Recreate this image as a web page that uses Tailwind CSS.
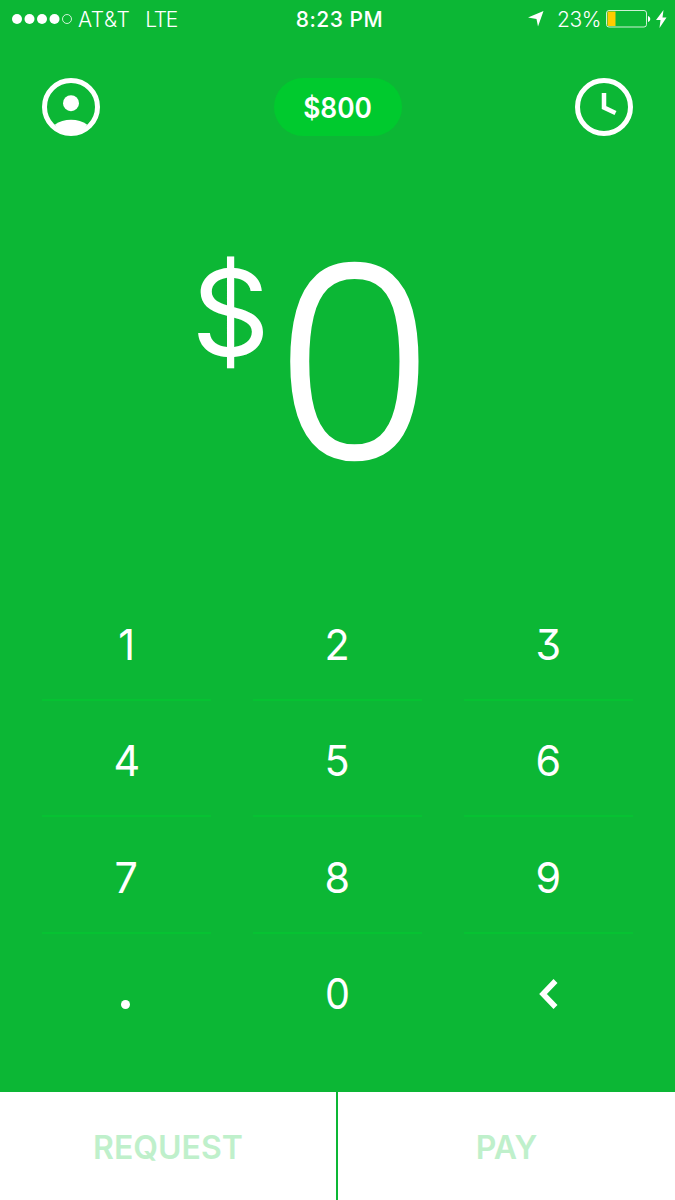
<!DOCTYPE html>
<html lang="en">
<head>
    <meta charset="UTF-8">
    <meta name="viewport" content="width=device-width, initial-scale=1.0">
    <title>Cash</title>
    <script src="https://cdn.jsdelivr.net/npm/@tailwindcss/browser@4"></script>
    <style>
        body {
            font-family: 'Inter', 'Liberation Sans', sans-serif;
            -webkit-font-smoothing: antialiased;
        }
        /* Flat-topped three on the keypad */
        #keypad {
            font-feature-settings: 'cv09' 1;
        }
        /* Weight between light and regular */
        #amount {
            -webkit-text-stroke: 5.5px #fff;
        }
    </style>
</head>
<body class="bg-[#0cb735] text-white h-[1200px] w-[675px] flex flex-col overflow-hidden">

    <!-- Status bar -->
    <div class="h-[38px] shrink-0 grid grid-cols-[1fr_auto_1fr] items-center pl-[12px] pr-[8px] pt-px text-[21px] leading-[37px]">
        <div class="flex items-center">
            <svg class="w-[61px] h-[12px] -mt-[2px]" viewBox="0 0 61 12" fill="#fff">
                <circle cx="5" cy="6" r="5" />
                <circle cx="17.5" cy="6" r="5" />
                <circle cx="30" cy="6" r="5" />
                <circle cx="42.5" cy="6" r="5" />
                <circle cx="55" cy="6" r="4.5" fill="none" stroke="#fff" stroke-width=".8" />
            </svg>
            <span class="ml-[5px] font-light tracking-[0.5px]">AT&amp;T</span>
            <span class="ml-[15px] font-light tracking-[-1.3px]">LTE</span>
        </div>
        <span class="font-medium tracking-[0.5px]">8:23 PM</span>
        <div class="flex items-center justify-end">
            <svg class="w-[16px] h-[16px] mr-[13px] -mt-px" viewBox="0 0 16 16" fill="#fff"><path d="M15.500 0 10 15.500 8.500 8 0 6.500z" /></svg>
            <span class="font-light tracking-[-0.4px]">23%</span>
            <svg class="w-[45px] h-[18px] ml-[5px] -mt-px" viewBox="0 0 45 18">
                <rect x=".5" y=".5" width="40" height="16.500" rx="2.500" fill="none" stroke="#fff" stroke-opacity=".8" />
                <path d="M2.500 1.500h7v14.500h-7a1 1 0 0 1-1-1V2.500a1 1 0 0 1 1-1z" fill="#ffcc00" />
                <path d="M42 6c3 1 3 5 0 6z" fill="#fff" />
            </svg>
            <svg class="w-[11px] h-[18px] ml-[5px] -mt-[2px]" viewBox="0 0 11 18" fill="#fff"><path d="M7.500 0 0 10h4.500L3.500 18l7-10.500H6.500z" /></svg>
        </div>
    </div>

    <!-- Header -->
    <header class="mt-[40px] h-[58px] shrink-0 px-[42px] flex justify-between items-center">
        <svg class="w-[58px] h-[58px]" viewBox="0 0 58 58">
            <circle cx="29" cy="29" r="26.500" fill="none" stroke="#fff" stroke-width="5" />
            <circle cx="29" cy="25.200" r="8" fill="#fff" />
            <path d="M13 46.500c8-6.500 24-6.500 32 0l-4 6c-7 4-17 4-24 0z" fill="#fff" />
        </svg>
        <div class="w-[128px] h-[58px] pt-[2px] rounded-full bg-[#00ca2e] flex items-center justify-center text-[28px] font-semibold">
            <span class="scale-x-[0.94]">$800</span>
        </div>
        <svg class="w-[58px] h-[58px]" viewBox="0 0 58 58" fill="none" stroke="#fff">
            <circle cx="29" cy="29" r="26.500" stroke-width="5" />
            <path d="M29 15v14.500l11.500 5.500" stroke-width="4.500" />
        </svg>
    </header>

    <!-- Amount -->
    <main class="h-[448px] shrink-0 pt-[82px] pl-[192px] flex items-start leading-none">
        <span class="w-[77px] text-center text-[119px] leading-[191px] scale-x-[1.03]">$</span>
        <span id="amount" class="w-[171px] text-center text-[264px] leading-[272px] font-['Open_Sans'] font-light scale-x-[1.02]">0</span>
    </main>

    <!-- Keypad -->
    <div id="keypad" class="h-[508px] shrink-0 px-[42px] grid grid-cols-3 gap-x-[42px] auto-rows-[116.500px] text-[43px] text-center">
        <div class="border-b-2 border-[#06c232] pt-[5px] flex items-center justify-center"><span class="scale-x-[0.96]">1</span></div>
        <div class="border-b-2 border-[#06c232] pt-[5px] flex items-center justify-center"><span class="scale-x-[0.96]">2</span></div>
        <div class="border-b-2 border-[#06c232] pt-[5px] flex items-center justify-center"><span class="scale-x-[0.96]">3</span></div>
        <div class="border-b-2 border-[#06c232] pt-[5px] flex items-center justify-center"><span class="scale-x-[0.96]">4</span></div>
        <div class="border-b-2 border-[#06c232] pt-[5px] flex items-center justify-center"><span class="scale-x-[0.96]">5</span></div>
        <div class="border-b-2 border-[#06c232] pt-[5px] flex items-center justify-center"><span class="scale-x-[0.96]">6</span></div>
        <div class="border-b-2 border-[#06c232] pt-[5px] flex items-center justify-center"><span class="scale-x-[0.96]">7</span></div>
        <div class="border-b-2 border-[#06c232] pt-[5px] flex items-center justify-center"><span class="scale-x-[0.96]">8</span></div>
        <div class="border-b-2 border-[#06c232] pt-[5px] flex items-center justify-center"><span class="scale-x-[0.96]">9</span></div>
        <div class="pt-[26px] pr-[2px] flex items-center justify-center"><span class="w-[9px] h-[9px] rounded-full bg-white"></span></div>
        <div class="pt-[2px] flex items-center justify-center"><span class="scale-x-[0.92]">0</span></div>
        <div class="pt-[4px] flex items-center justify-center">
            <svg class="w-[20px] h-[32px]" viewBox="0 0 20 32" fill="none" stroke="#fff" stroke-width="5.500"><path d="m16.500 3-12.500 13 12.500 13" /></svg>
        </div>
    </div>

    <!-- Actions -->
    <footer class="h-[108px] shrink-0 bg-white text-[#bff0cb] text-[32px] font-semibold flex">
        <button class="w-[338px] pt-[3px] border-r-2 border-[#0cb735]">REQUEST</button>
        <button class="flex-1 pt-[3px]">PAY</button>
    </footer>
</body>
</html>
